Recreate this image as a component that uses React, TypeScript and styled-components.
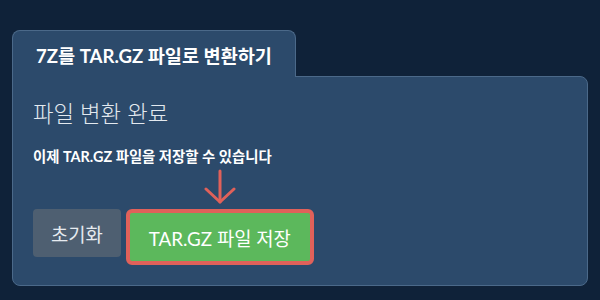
import styled, { createGlobalStyle } from 'styled-components';

const GlobalStyle = createGlobalStyle`
  html, body {
    margin: 0;
    padding: 0;
    background-color: #0f2239;
  }
  body {
    font-family: 'Lato', 'Noto Sans CJK KR', sans-serif;
    color: #ffffff;
  }
`;

const Page = styled.div`
  padding: 30px 12px 0 12px;
  width: 600px;
  height: 300px;
  box-sizing: border-box;
`;

const Tab = styled.div`
  display: inline-flex;
  align-items: center;
  position: relative;
  z-index: 1;
  height: 46px;
  padding: 0 23px;
  margin-bottom: -1px;
  background-color: #2c4a6b;
  border: 1px solid #4b6989;
  border-bottom: none;
  border-radius: 8px 8px 0 0;
  font-size: 18.6px;
  font-weight: 700;
  color: #ffffff;
`;

const Panel = styled.div`
  background-color: #2c4a6b;
  border: 1px solid #4b6989;
  border-radius: 0 8px 8px 8px;
  padding: 20px 20px 20px 20px;
`;

const Heading = styled.h2`
  margin: 0;
  padding-top: 2px;
  font-size: 22.3px;
  line-height: 30px;
  font-weight: 300;
  color: #e3e9ef;
`;

const Message = styled.p`
  margin: 18px 0 0 0;
  font-size: 14.4px;
  line-height: 20px;
  font-weight: 700;
  color: #ffffff;
`;

const Actions = styled.div`
  display: flex;
  align-items: flex-start;
  gap: 5px;
  margin-top: 42px;
`;

const Button = styled.button<{ $variant: 'reset' | 'save' }>`
  height: ${(p) => (p.$variant === 'save' ? '56px' : '48px')};
  padding: ${(p) => (p.$variant === 'save' ? '0 19px' : '0 18px')};
  border: ${(p) => (p.$variant === 'save' ? '4px solid #e0615a' : 'none')};
  border-radius: ${(p) => (p.$variant === 'save' ? '6px' : '4px')};
  background-color: ${(p) => (p.$variant === 'save' ? '#5cb85c' : '#4e5f71')};
  color: ${(p) => (p.$variant === 'save' ? '#ffffff' : '#e6ebf0')};
  font-family: 'Lato', 'Noto Sans CJK KR', sans-serif;
  font-size: 18.8px;
  font-weight: 400;
  cursor: pointer;
`;

const SaveWrap = styled.div`
  position: relative;
`;

const Arrow = styled.svg`
  position: absolute;
  left: 50%;
  top: -40px;
  transform: translateX(-50%);
`;

export default function App() {
  return (
    <>
      <GlobalStyle />
      <Page>
        <Tab>7Z를 TAR.GZ 파일로 변환하기</Tab>
        <Panel>
          <Heading>파일 변환 완료</Heading>
          <Message>이제 TAR.GZ 파일을 저장할 수 있습니다</Message>
          <Actions>
            <Button $variant="reset">초기화</Button>
            <SaveWrap>
              <Arrow width="32" height="36" viewBox="0 0 32 36">
                <g stroke="#e0615a" strokeWidth="3" strokeLinecap="round" fill="none">
                  <line x1="16" y1="2" x2="16" y2="33" />
                  <polyline points="2,20 16,33 30,20" strokeLinejoin="round" />
                </g>
              </Arrow>
              <Button $variant="save">TAR.GZ 파일 저장</Button>
            </SaveWrap>
          </Actions>
        </Panel>
      </Page>
    </>
  );
}
